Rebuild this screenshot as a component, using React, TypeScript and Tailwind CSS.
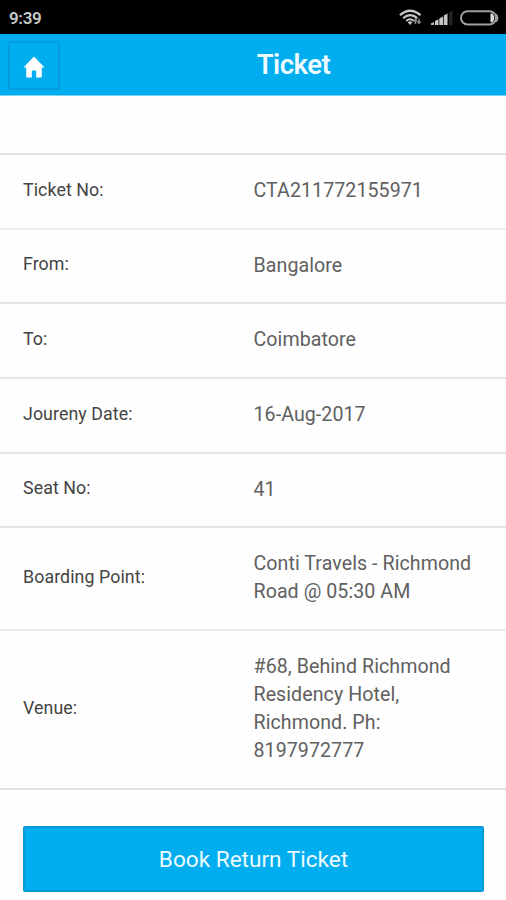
interface TicketRowProps {
  label: string;
  value: string;
  className: string;
}

function TicketRow({ label, value, className }: TicketRowProps) {
  return (
    <div className={`flex items-center border-b-2 pb-px pl-[23px] ${className}`}>
      <dt className="w-[230.5px] shrink-0 pb-[3px] text-[17.8px] leading-7 tracking-[0.08px] text-[#444444]">{label}</dt>
      <dd className="w-[230px] text-[19.6px] leading-[28px] tracking-[0.07px] text-[#606060]">{value}</dd>
    </div>
  );
}

function WifiIcon() {
  return (
    <svg width="24" height="18" viewBox="0 0 24 18" fill="none" stroke="#c8c8c8">
      <path d="M1 6.2Q11 -2.6 21.500 6.200" strokeWidth="2.400" />
      <path d="M4.200 9.200Q11 3 18.300 9.200" strokeWidth="2.200" />
      <path d="M7.200 12Q11 8.600 14.800 12" strokeWidth="2" />
      <path d="M8.800 13.200L11 16L13.200 13.200Q11 11.500 8.800 13.200Z" fill="#c8c8c8" stroke="none" />
      <path d="M16.500 15V10.500M14.900 12.200L16.500 10.300L18 12.200M20 9.500V14M18.500 12.500L20 14.400L21.600 12.500" stroke="#8a8a8a" strokeWidth="1.500" />
    </svg>
  );
}

function SignalIcon() {
  return (
    <svg width="22" height="16" viewBox="0 0 22 16">
      <path d="M0 15V13.300L3 12V15Z" fill="#b5b5b5" />
      <path d="M4 15V11L7.500 9.300V15Z" fill="#c8c8c8" />
      <path d="M8.300 15V8.400L12 6.500V15Z" fill="#c8c8c8" />
      <path d="M12.800 15V5.600L16.500 3.500V15Z" fill="#c8c8c8" />
      <path d="M18 15V2.500L21.500 .5V15Z" fill="#242424" />
    </svg>
  );
}

function BatteryIcon() {
  return (
    <svg width="40" height="16" viewBox="0 0 40 16">
      <rect x="1" y="1.200" width="35" height="13.300" rx="6.600" fill="none" stroke="#a0a0a0" strokeWidth="2" />
      <path d="M36.500 4Q39.500 8 36.500 12Z" fill="#a0a0a0" stroke="#a0a0a0" strokeWidth="1" />
      <path d="M30.500 3.500H32.500Q36 8 32.500 12.300H30.500Z" fill="#dedede" />
    </svg>
  );
}

export default function App() {
  const rows: TicketRowProps[] = [
    { label: 'Ticket No:', value: 'CTA211772155971', className: 'h-[75px] border-[#eeeeee]' },
    { label: 'From:', value: 'Bangalore', className: 'h-[74px] border-[#e6e6e6]' },
    { label: 'To:', value: 'Coimbatore', className: 'h-[75px] border-[#e6e6e6]' },
    { label: 'Joureny Date:', value: '16-Aug-2017', className: 'h-[75px] border-[#e6e6e6]' },
    { label: 'Seat No:', value: '41', className: 'h-[74px] border-[#e6e6e6]' },
    { label: 'Boarding Point:', value: 'Conti Travels - Richmond Road @ 05:30 AM', className: 'h-[103px] border-[#ececec]' },
    { label: 'Venue:', value: '#68, Behind Richmond Residency Hotel, Richmond. Ph: 8197972777', className: 'h-[159px] border-[#e2e2e2]' },
  ];

  return (
    <div className="flex h-[900px] w-[506px] flex-col overflow-hidden bg-[#fefefe] font-[Roboto,sans-serif]">
      {/* Status bar */}
      <div className="flex h-[34px] shrink-0 items-center bg-black pr-[6px] pl-[9px]">
        <span className="flex-1 pt-[3px] text-[17px] font-semibold tracking-[-0.35px] text-[#c8c8c8]">9:39</span>
        <div className="flex items-center pt-px">
          <WifiIcon />
          <div className="ml-2 mr-[7px]">
            <SignalIcon />
          </div>
          <BatteryIcon />
        </div>
      </div>

      <header className="flex h-[62px] shrink-0 items-center border-b border-[#7dd2f5] bg-[#00aeef] pl-2">
        <button className="mt-px flex h-[49px] w-[52px] items-center justify-center rounded-[3px] border-2 border-[#069bdd] pt-[3px]" aria-label="Home">
          <svg width="22" height="22" viewBox="0 0 22 22" fill="white">
            <path d="M11 0.500L21.500 11.500H18.800V20.500Q18.800 21.500 17.800 21.500H13.200V15.500Q13.200 14.500 12.200 14.500H9.800Q8.800 14.500 8.800 15.500V21.500H4.200Q3.200 21.500 3.200 20.500V11.500H0.500Z" />
          </svg>
        </button>
        <h1 className="flex-1 pl-[21px] text-center text-[27.5px] font-semibold tracking-[-0.5px] text-[#edfaff]">Ticket</h1>
      </header>

      <div className="h-[59px] shrink-0 border-b-2 border-[#e2e2e2]" />

      <dl>
        {rows.map((row) => (
          <TicketRow key={row.label} {...row} />
        ))}
      </dl>

      <button className="mx-[23px] mt-[36px] h-[66px] w-[461px] shrink-0 rounded-[2px] border-2 border-[#0799d3] bg-[#00aeef] pt-px text-[22.6px] text-[#edfaff]">
        Book Return Ticket
      </button>
    </div>
  );
}
